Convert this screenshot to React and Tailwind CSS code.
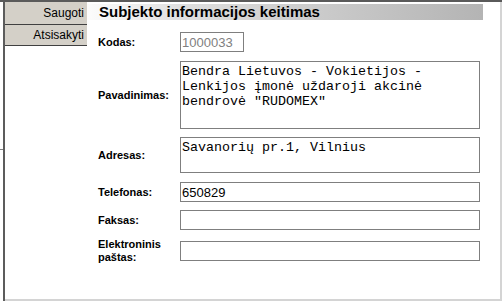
import React from 'react';

const label = 'w-[82px] shrink-0 text-[11px] font-bold leading-[13px] text-black';
const box = 'border border-[#7f7f7f] bg-white outline-none';

export default function App() {
  return (
    <div className="relative flex w-[502px] h-[301px] bg-white border-t-2 border-[#5a5a5a] font-['Liberation_Sans',Arial,sans-serif] overflow-hidden">
      {/* left edge */}
      <div className="w-[3px] shrink-0 flex flex-col">
        <div className="h-[147px]" />
        <div className="h-px bg-[#808080]" />
      </div>
      <div className="w-[2px] shrink-0 bg-[#5c5c5c]" />

      <div className="flex flex-1 border-r-2 border-b-2 border-[#d4d4d4]">
        {/* Sidebar */}
        <div className="w-[82px] shrink-0 flex flex-col">
          <button className="h-[23px] bg-[#d4d0c8] border-b border-[#404040] text-right pr-[3px] text-[12px] text-black">
            Saugoti
          </button>
          <button className="h-[21px] bg-[#d4d0c8] border-b border-[#404040] text-right pr-[3px] text-[12px] text-black">
            Atsisakyti
          </button>
        </div>

        {/* Main */}
        <div className="flex-1 flex flex-col">
          <div className="mt-[2px] w-[396px] h-[16px] bg-linear-to-r from-[#fcfcfc] via-[#dedede] via-25% to-[#b4b4b4] pl-[12px] text-[15px] leading-[16px] font-bold text-black">
            Subjekto informacijos keitimas
          </div>

          <div className="pl-[11px] flex flex-col">
            <div className="mt-[12px] flex items-center">
              <div className={label}>Kodas:</div>
              <input readOnly value="1000033" className={`${box} w-[64px] h-[20px] px-px text-[13px] text-[#808080]`} />
            </div>

            <div className="mt-[9px] flex items-center">
              <div className={label}>Pavadinimas:</div>
              <textarea
                readOnly
                value={'Bendra Lietuvos - Vokietijos -\nLenkijos įmonė uždaroji akcinė\nbendrovė "RUDOMEX"'}
                className={`${box} w-[300px] h-[68px] px-[1px] pt-[2px] resize-none overflow-hidden font-['Liberation_Mono','Courier_New',monospace] text-[13.33px] leading-[15px] text-black`}
              />
            </div>

            <div className="mt-[8px] flex items-center">
              <div className={label}>Adresas:</div>
              <textarea
                readOnly
                value="Savanorių pr.1, Vilnius"
                className={`${box} w-[300px] h-[36px] px-[1px] pt-[2px] resize-none overflow-hidden font-['Liberation_Mono','Courier_New',monospace] text-[13.33px] leading-[15px] text-black`}
              />
            </div>

            <div className="mt-[9px] flex items-center">
              <div className={label}>Telefonas:</div>
              <input readOnly value="650829" className={`${box} w-[300px] h-[20px] px-px text-[13px] text-black`} />
            </div>

            <div className="mt-[8px] flex items-center">
              <div className={label}>Faksas:</div>
              <input readOnly value="" className={`${box} w-[300px] h-[20px] px-px text-[13px] text-black`} />
            </div>

            <div className="mt-[8px] flex items-center">
              <div className={label}>
                Elektroninis
                <br />
                paštas:
              </div>
              <input readOnly value="" className={`${box} w-[300px] h-[20px] px-px text-[13px] text-black`} />
            </div>
          </div>
        </div>
      </div>
    </div>
  );
}
